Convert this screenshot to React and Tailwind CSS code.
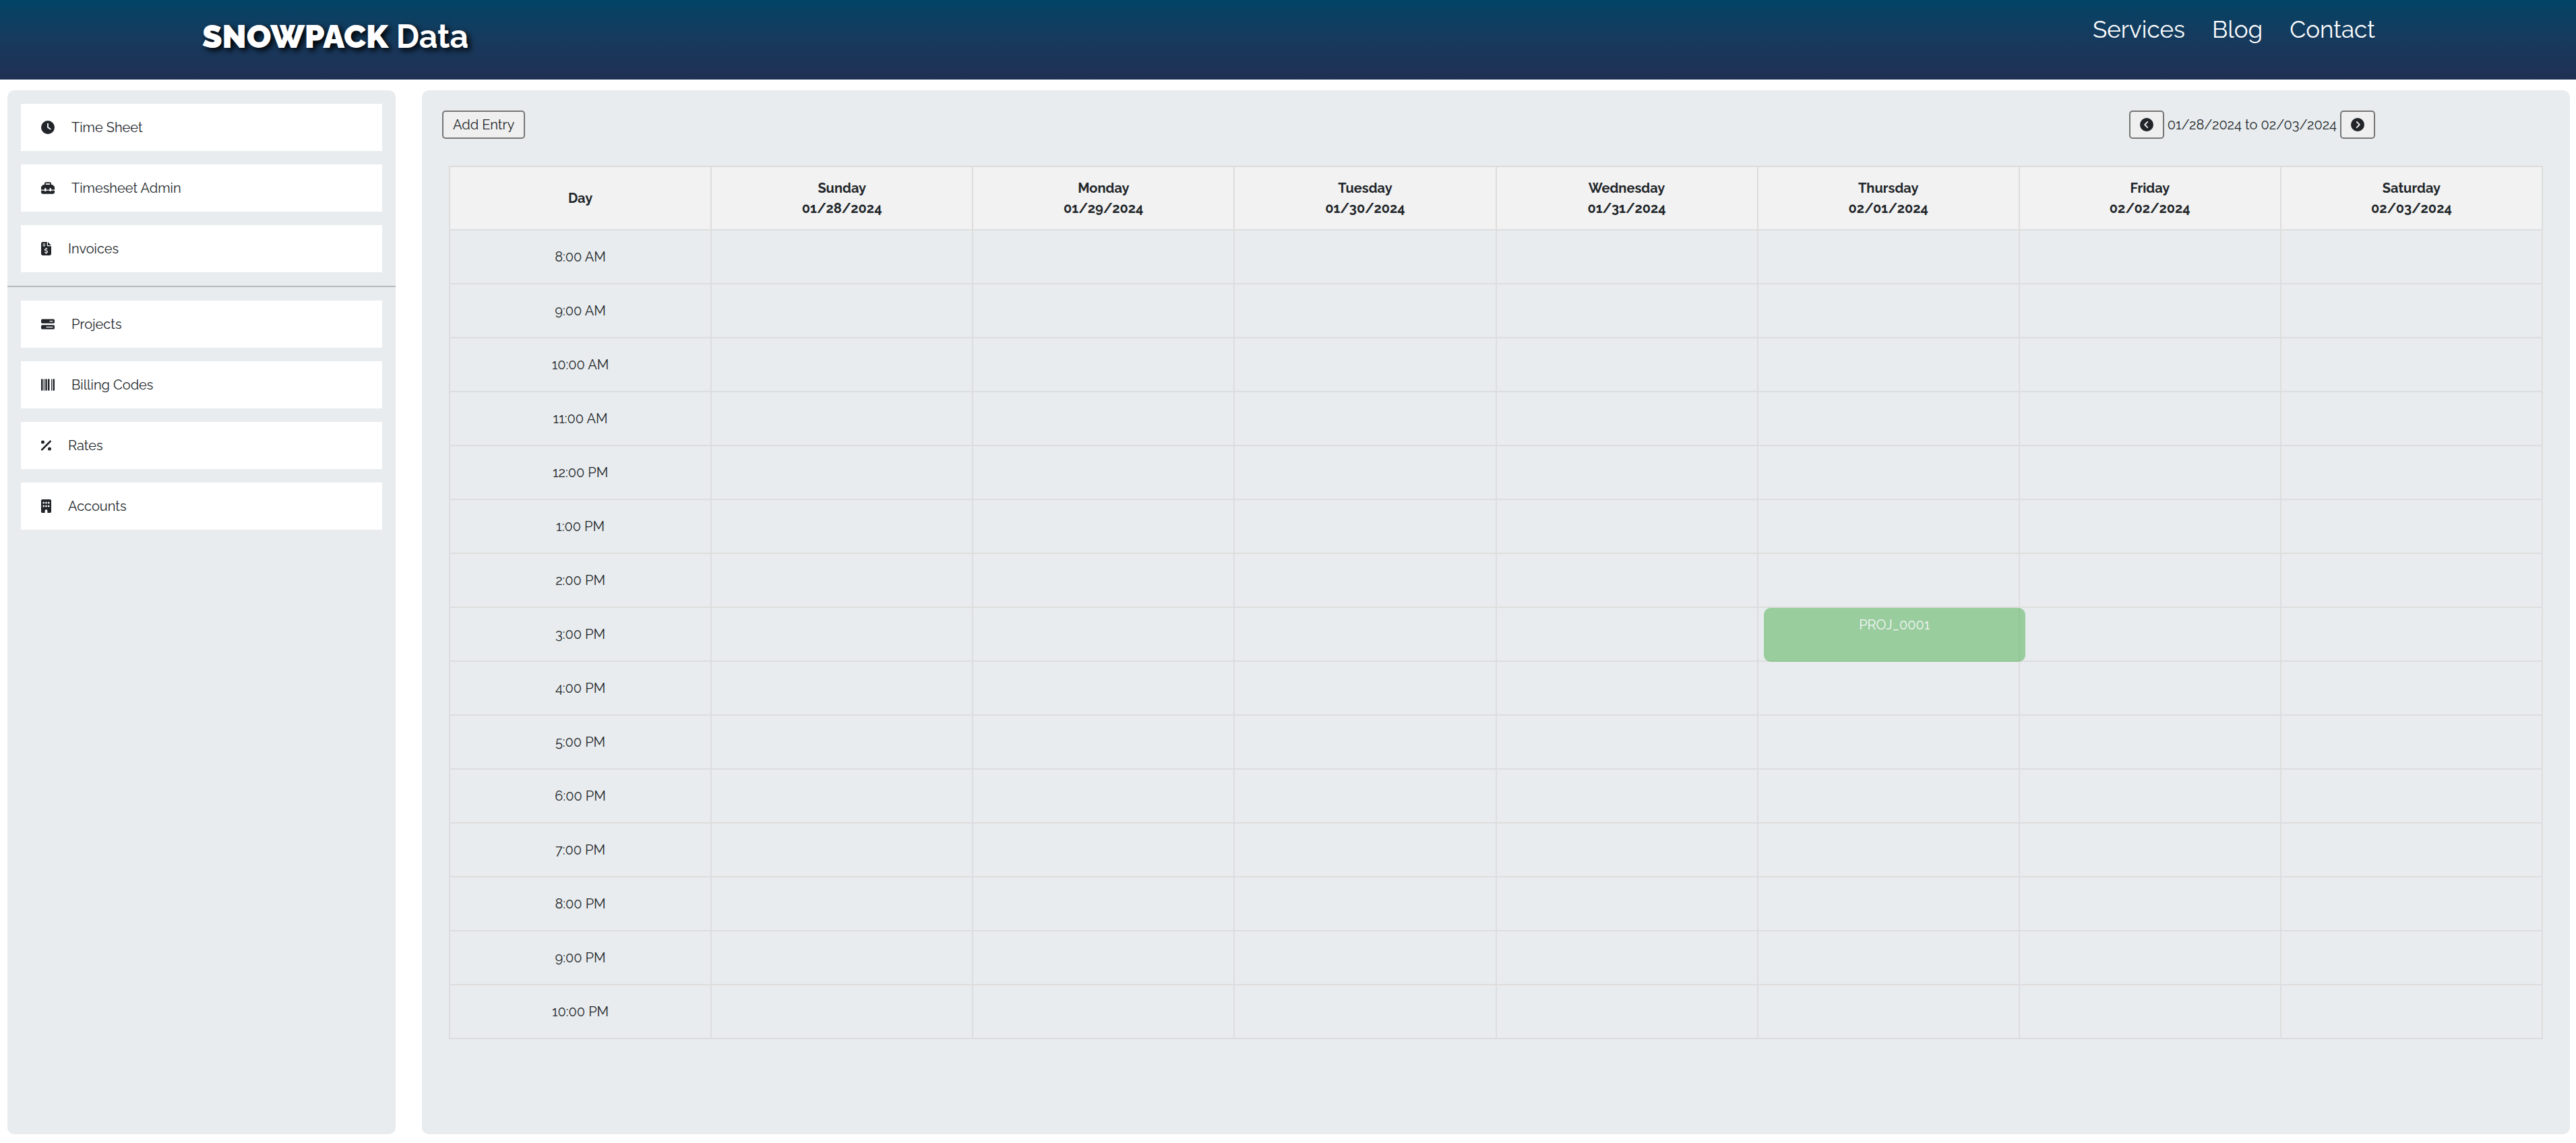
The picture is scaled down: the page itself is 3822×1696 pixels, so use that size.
import React from "react";
import {
  FaClock,
  FaToolbox,
  FaFileInvoiceDollar,
  FaBarsProgress,
  FaBarcode,
  FaPercent,
  FaBuilding,
  FaCircleChevronLeft,
  FaCircleChevronRight,
} from "react-icons/fa6";

const WIDE = "h-5 w-5";
const NARROW = "h-5 w-[15px]";

const TIME_LINKS = [
  { label: "Time Sheet", Icon: FaClock, size: WIDE },
  { label: "Timesheet Admin", Icon: FaToolbox, size: WIDE },
  { label: "Invoices", Icon: FaFileInvoiceDollar, size: NARROW },
];

const ADMIN_LINKS = [
  { label: "Projects", Icon: FaBarsProgress, size: WIDE },
  { label: "Billing Codes", Icon: FaBarcode, size: WIDE },
  { label: "Rates", Icon: FaPercent, size: NARROW },
  { label: "Accounts", Icon: FaBuilding, size: NARROW },
];

const DAYS = [
  ["Sunday", "01/28/2024"],
  ["Monday", "01/29/2024"],
  ["Tuesday", "01/30/2024"],
  ["Wednesday", "01/31/2024"],
  ["Thursday", "02/01/2024"],
  ["Friday", "02/02/2024"],
  ["Saturday", "02/03/2024"],
];

const HOURS = [
  "8:00 AM", "9:00 AM", "10:00 AM", "11:00 AM", "12:00 PM",
  "1:00 PM", "2:00 PM", "3:00 PM", "4:00 PM", "5:00 PM",
  "6:00 PM", "7:00 PM", "8:00 PM", "9:00 PM", "10:00 PM",
];

const ENTRIES = [{ date: "02/01/2024", hour: "3:00 PM", project: "PROJ_0001" }];

function NavList({ links }) {
  return (
    <ul className="flex flex-col gap-5 p-5">
      {links.map(({ label, Icon, size }) => (
        <li key={label}>
          <a href="#" className="flex items-center gap-[25px] bg-white px-[30px] py-5">
            <Icon className={size} />
            {label}
          </a>
        </li>
      ))}
    </ul>
  );
}

function Button({ children, ...props }) {
  return (
    <button
      type="button"
      className="flex h-[42px] items-center rounded-[5px] border-2 border-[#767676] bg-[#efefef] px-[14px]"
      {...props}
    >
      {children}
    </button>
  );
}

function Header() {
  return (
    <header className="flex h-[118px] items-start justify-between bg-linear-to-b from-[#004466] to-[#1f3054] pr-[298px] pl-[300px] text-white">
      <a
        href="#"
        className="pt-[18px] text-[48px] leading-[72px] font-bold [text-shadow:4px_4px_8px_#000000]"
      >
        <span className="font-black">SNOWPACK</span> Data
      </a>
      <nav className="flex gap-10 pt-[18px] text-[35px] leading-[52px]">
        <a href="#">Services</a>
        <a href="#">Blog</a>
        <a href="#">Contact</a>
      </nav>
    </header>
  );
}

function Schedule() {
  return (
    <table className="w-full table-fixed border-collapse text-center">
      <thead>
        <tr className="h-[94px] bg-[#f2f2f2]">
          <th scope="col" className="border-2 border-[#dddddd]">Day</th>
          {DAYS.map(([day, date]) => (
            <th key={date} scope="col" className="border-2 border-[#dddddd]">
              {day}
              <br />
              {date}
            </th>
          ))}
        </tr>
      </thead>
      <tbody>
        {HOURS.map((hour) => (
          <tr key={hour} className="h-20">
            <th scope="row" className="border-2 border-[#dddddd] font-normal">{hour}</th>
            {DAYS.map(([, date]) => {
              const entry = ENTRIES.find((e) => e.date === date && e.hour === hour);
              return (
                <td key={date} className="relative border-2 border-[#dddddd]">
                  {entry && (
                    <div className="absolute top-0 left-2 h-20 w-[calc(100%+2px)] rounded-[10px] bg-[#4caf50] py-2.5 text-white opacity-50">
                      {entry.project}
                    </div>
                  )}
                </td>
              );
            })}
          </tr>
        ))}
      </tbody>
    </table>
  );
}

export default function App() {
  return (
    <div className="flex min-h-screen flex-col bg-white font-[Raleway,Lato,sans-serif] text-xl leading-[30px] text-[#212529]">
      <Header />
      <div className="flex flex-1 gap-[39px] pt-4 pr-[9px] pb-[13px] pl-[11px]">
        <aside className="w-[576px] shrink-0 rounded-[10px] bg-[#e8ecee]">
          <NavList links={TIME_LINKS} />
          <hr className="border-t-2 border-[#b6babc]" />
          <NavList links={ADMIN_LINKS} />
        </aside>
        <main className="min-w-0 flex-1 rounded-[10px] bg-[#e8ecee]">
          <div className="flex items-center justify-between pt-[30px] pr-[289px] pl-[30px]">
            <Button>Add Entry</Button>
            <div className="flex items-center gap-[5px]">
              <Button aria-label="Previous week">
                <FaCircleChevronLeft className="h-5 w-5" />
              </Button>
              <span>01/28/2024 to 02/03/2024</span>
              <Button aria-label="Next week">
                <FaCircleChevronRight className="h-5 w-5" />
              </Button>
            </div>
          </div>
          <div className="p-10">
            <Schedule />
          </div>
        </main>
      </div>
    </div>
  );
}
